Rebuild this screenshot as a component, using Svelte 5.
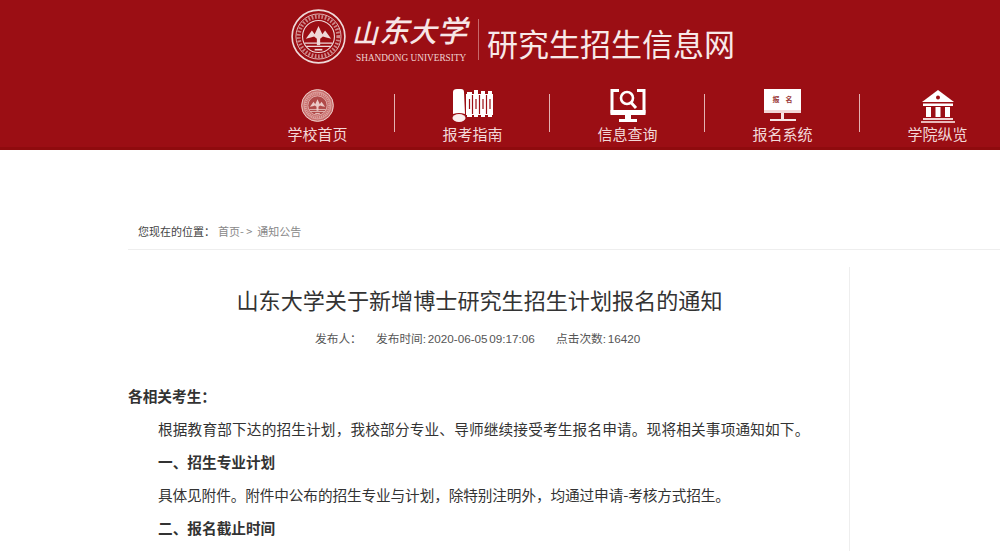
<script>
  const navItems = [
    { label: '学校首页', icon: 'seal' },
    { label: '报考指南', icon: 'books' },
    { label: '信息查询', icon: 'search' },
    { label: '报名系统', icon: 'signup' },
    { label: '学院纵览', icon: 'temple' }
  ];
</script>

{#snippet seal(fg, bg)}
  <circle cx="50" cy="50" r="48" fill="none" stroke={fg} stroke-width="3" />
  <circle cx="50" cy="50" r="41" fill="none" stroke={fg} stroke-width="1.5" />
  <circle cx="50" cy="50" r="36" fill="none" stroke={fg} stroke-width="7" stroke-dasharray="3 3" opacity="0.6" />
  <circle cx="50" cy="50" r="29" fill={bg} stroke={fg} stroke-width="2" />
  <path d="M27 54 L38 39 L43 46 L50 31 L57 46 L62 39 L73 54 L64 52 L58 50 L53 54 L53 66 L47 66 L47 54 L42 50 L36 52 Z" fill={fg} />
  <path d="M25 62 H75 M28 68 H72" stroke={fg} stroke-width="2.5" fill="none" />
  <path d="M43 74 H57" stroke={fg} stroke-width="3" fill="none" />
{/snippet}

<div class="page">
  <header class="banner">
    <div class="brand">
      <svg class="logo-seal" viewBox="0 0 100 100" aria-hidden="true">
        {@render seal('#efd9d9', '#9b0e14')}
      </svg>
      <div class="wordmark">
        <div class="callig"><span>山</span><span>东</span><span>大</span><span>学</span></div>
        <div class="latin">SHANDONG UNIVERSITY</div>
      </div>
      <div class="divider"></div>
      <div class="site-name">研究生招生信息网</div>
    </div>
    <nav class="nav">
      {#each navItems as item}
        <div class="nav-item">
          <div class="nav-icon">
            {#if item.icon === 'seal'}
              <svg width="33" height="33" viewBox="0 0 100 100" aria-hidden="true">
                <circle cx="50" cy="50" r="49" fill="#c9706e" />
                {@render seal('#ecc9c6', '#b04a49')}
              </svg>
            {:else if item.icon === 'books'}
              <svg width="42" height="34" viewBox="0 0 42 34" aria-hidden="true">
                <path d="M1 3 Q1 0 5 0 H9 Q12 0 12 3 L13 25 Q7 23 1 25 Z" fill="#fff" />
                <ellipse cx="7" cy="29" rx="6.500" ry="4" fill="#fbeeee" />
                <path d="M14 5 H41 V26 H14 Z" fill="#fff" />
                <path d="M15 3 H20 V28 H15 Z M22 1 H26 V28 H22 Z M29 2 H33 V28 H29 Z M36 2 H40 V28 H36 Z" fill="#fff" />
                <path d="M20.500 6 V25 M27.500 6 V25 M34.500 6 V25 M17.500 10 V20 M24 10 V20 M31 10 V20 M38 10 V20" stroke="#9b0e14" stroke-width="1.200" />
              </svg>
            {:else if item.icon === 'search'}
              <svg width="36" height="34" viewBox="0 0 36 34" aria-hidden="true">
                <path d="M9 1.500 H2 V23 H34 V1.500 H27" fill="none" stroke="#fff" stroke-width="3" />
                <path d="M0.500 21 H35.500 V26 H0.500 Z M15 26 H21 V30 H15 Z M9 30 H27 V33 H9 Z" fill="#fff" />
                <circle cx="17" cy="9" r="6" fill="none" stroke="#fff" stroke-width="2.600" />
                <path d="M21 13.500 L26 19" stroke="#fff" stroke-width="3" />
              </svg>
            {:else if item.icon === 'signup'}
              <div class="monitor">
                <div class="screen"><span>报</span><span>名</span></div>
                <div class="stand"></div>
                <div class="foot"></div>
              </div>
            {:else}
              <svg width="34" height="34" viewBox="0 0 34 34" aria-hidden="true">
                <path d="M17 1 L33 13 H1 Z" fill="#fff" />
                <circle cx="17" cy="8.500" r="2" fill="#9b0e14" />
                <path d="M2 14.500 H32 V17 H2 Z" fill="#fff" />
                <path d="M5 18 H10 V28 H5 Z M14.500 18 H19.500 V28 H14.500 Z M24 18 H29 V28 H24 Z" fill="#fff" />
                <path d="M2 29 H32 V31 H2 Z" fill="#f2d7d7" />
                <path d="M0 32 H34 V34 H0 Z" fill="#e9b9b9" />
              </svg>
            {/if}
          </div>
          <div class="nav-label">{item.label}</div>
        </div>
      {/each}
    </nav>
  </header>

  <main class="main">
    <div class="crumb">
      <span class="here">您现在的位置：</span><span class="path">首页- &gt;&nbsp; 通知公告</span>
    </div>
    <article class="article">
      <h1>山东大学关于新增博士研究生招生计划报名的通知</h1>
      <div class="meta">
        <span>发布人：</span>
        <span>发布时间: 2020-06-05 09:17:06</span>
        <span>点击次数: 16420</span>
      </div>
      <div class="body">
        <p class="greet">各相关考生：</p>
        <p class="wide">根据教育部下达的招生计划，我校部分专业、导师继续接受考生报名申请。现将相关事项通知如下。</p>
        <p class="head">一、招生专业计划</p>
        <p class="tight">具体见附件。附件中公布的招生专业与计划，除特别注明外，均通过申请-考核方式招生。</p>
        <p class="head">二、报名截止时间</p>
      </div>
    </article>
  </main>
</div>

<style>
  :global(body) {
    margin: 0;
    background: #fff;
    overflow: hidden;
  }
  .page {
    width: 1000px;
    height: 551px;
    overflow: hidden;
    font-family: "Noto Sans CJK SC", "Liberation Sans", sans-serif;
    color: #333;
  }
  .banner {
    height: 150px;
    box-sizing: border-box;
    background: #9b0e14;
    border-bottom: 3px solid #8f0b0e;
    overflow: hidden;
  }
  .brand {
    height: 75px;
    display: flex;
    align-items: flex-start;
    padding-left: 291px;
  }
  .logo-seal {
    width: 55px;
    height: 55px;
    margin-top: 9px;
    flex: none;
  }
  .wordmark {
    width: 118px;
    margin-left: 7px;
    margin-top: 9px;
    flex: none;
  }
  .callig {
    display: flex;
    gap: 1px;
    height: 42px;
    color: #f7e6e6;
    font-size: 30px;
    line-height: 40px;
    font-weight: 500;
    transform: skewX(-14deg);
  }
  .callig span {
    display: block;
    width: 28px;
  }
  .callig span:nth-child(1) {
    transform: translateY(3px) scale(0.86);
  }
  .callig span:nth-child(3) {
    transform: translateY(1px) scale(0.92);
  }
  .latin {
    font-family: "Liberation Serif", serif;
    font-size: 9.300px;
    line-height: 12px;
    color: #efd3d3;
    white-space: nowrap;
    margin-left: 3px;
    margin-top: 1px;
  }
  .divider {
    width: 1px;
    height: 41px;
    margin: 19px 0 0 7px;
    flex: none;
    background: #c7686b;
  }
  .site-name {
    margin: 20px 0 0 8px;
    font-size: 31px;
    line-height: 46px;
    color: #f8e9e9;
    white-space: nowrap;
  }
  .nav {
    display: flex;
    padding-left: 240px;
    width: 775px;
  }
  .nav-item {
    width: 155px;
    height: 65px;
    flex: none;
    position: relative;
    text-align: center;
  }
  .nav-item::after {
    content: "";
    position: absolute;
    right: 0;
    top: 19px;
    height: 38px;
    width: 1px;
    background: #e4b2b2;
  }
  .nav-icon {
    height: 34px;
    margin-top: 14px;
    display: flex;
    justify-content: center;
    align-items: flex-start;
  }
  .nav-label {
    font-size: 15px;
    line-height: 20px;
    margin-top: 1px;
    color: #f3d9d9;
  }
  .monitor {
    width: 37px;
    display: flex;
    flex-direction: column;
    align-items: center;
  }
  .screen {
    width: 37px;
    height: 24px;
    background: #fff;
    border-bottom: 3px solid #f2d7d7;
    box-sizing: border-box;
    display: flex;
    justify-content: center;
    align-items: center;
    gap: 6px;
    font-size: 7px;
    line-height: 1;
    font-weight: 700;
    color: #9b3a3a;
  }
  .stand {
    width: 3px;
    height: 6px;
    background: #f6e4e4;
  }
  .foot {
    width: 26px;
    height: 2px;
    background: #f6e4e4;
  }
  .main {
    margin-left: 128px;
  }
  .crumb {
    height: 100px;
    box-sizing: border-box;
    padding: 72px 0 0 10px;
    border-bottom: 1px solid #eee;
    font-size: 11px;
    line-height: 18px;
  }
  .here {
    color: #444;
    margin-right: 3px;
  }
  .path {
    color: #888;
  }
  .article {
    width: 721px;
    height: 290px;
    margin-top: 17px;
    border-right: 1px solid #eee;
  }
  h1 {
    margin: 0;
    padding: 15px 18px 0 0;
    text-align: center;
    font-size: 22.100px;
    line-height: 34px;
    font-weight: 400;
    color: #333;
  }
  .meta {
    display: flex;
    margin-top: 14px;
    padding-left: 187px;
    font-family: "Liberation Sans", "Noto Sans CJK SC", sans-serif;
    font-size: 11.700px;
    word-spacing: -1.500px;
    line-height: 18px;
    color: #555;
  }
  .meta span:nth-child(1) {
    width: 61px;
  }
  .meta span:nth-child(2) {
    width: 180px;
  }
  .body {
    margin-top: 31px;
    font-size: 14.670px;
    line-height: 33px;
    color: #333;
  }
  .body p {
    margin: 0;
    text-indent: 30px;
    white-space: nowrap;
  }
  .body .greet {
    text-indent: 0;
    font-weight: 700;
  }
  .body .head {
    font-weight: 700;
  }
  .body .wide {
    letter-spacing: 0.150px;
  }
  .body .tight {
    letter-spacing: -0.120px;
  }
</style>
